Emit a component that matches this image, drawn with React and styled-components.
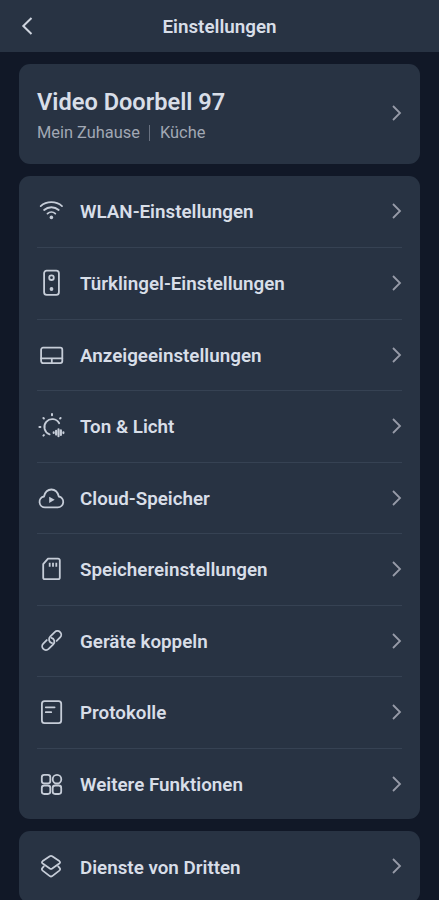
import styled, { createGlobalStyle } from "styled-components";

const GlobalStyle = createGlobalStyle`
  * {
    box-sizing: border-box;
  }

  body {
    margin: 0;
    background: #111827;
    color: #d8dee8;
    font-family: Roboto, "Liberation Sans", sans-serif;
  }
`;

const Page = styled.div`
  height: 900px;
  overflow: hidden;
`;

const Header = styled.header`
  display: grid;
  grid-template-columns: 60px 1fr 60px;
  align-items: center;
  height: 51.5px;
  padding-top: 2px;
  background: #283343;
`;

const BackButton = styled.button`
  display: flex;
  padding: 0 0 2px 18px;
  border: 0;
  background: none;
  color: #cfd5df;
`;

const Title = styled.h1`
  margin: 0;
  font-size: 18.8px;
  font-weight: 600;
  line-height: 24px;
  text-align: center;
`;

const Content = styled.main`
  display: flex;
  flex-direction: column;
  gap: 11.8px;
  padding: 12px 19px 0;
`;

const Card = styled.section`
  padding: 0 18px;
  border-radius: 11px;
  background: #283343;
`;

const DeviceCard = styled(Card)`
  display: flex;
  align-items: center;
  justify-content: space-between;
  height: 100.5px;
`;

const DeviceName = styled.h2`
  margin: 0;
  padding-top: 2px;
  font-size: 23.6px;
  font-weight: 600;
  line-height: 30px;
`;

const Location = styled.div`
  display: flex;
  align-items: center;
  gap: 9.5px;
  margin-top: 6px;
  color: #a1a8b4;
  font-size: 16.4px;
  line-height: 20px;
`;

const Divider = styled.span`
  width: 1px;
  height: 16px;
  background: #687180;
`;

const Row = styled.div`
  display: flex;
  align-items: center;
  height: 71.5px;
  color: #d8dee8;

  & + & {
    border-top: 1px solid #364253;
  }
`;

const Label = styled.span`
  flex: 1;
  margin-left: 15px;
  padding-top: 1.4px;
  font-size: 18.8px;
  font-weight: 600;
  line-height: 24px;
`;

const RowIcon = styled.svg`
  width: 28px;
  height: 28px;
  flex: none;
  margin-bottom: 0.5px;
  overflow: visible;
  fill: none;
  stroke: #c6cdd8;
  stroke-width: 1.8;
  stroke-linecap: round;
  stroke-linejoin: round;

  .solid {
    fill: #c6cdd8;
    stroke: none;
  }
`;

const ArrowIcon = styled.svg`
  width: 10px;
  height: 16px;
  flex: none;
  margin-bottom: 1px;
  fill: none;
  stroke: #979ba8;
  stroke-width: 1.8;
`;

const Arrow = () => (
  <ArrowIcon viewBox="0 0 10 16">
    <path d="M1 1 8 8 1 15" />
  </ArrowIcon>
);

const icons = {
  wifi: (
    <>
      <path d="M3.7 9.1C9.6 3.8 19.1 3.8 25 9.1" />
      <path d="M7.1 13C11.2 9.3 17.6 9.3 21.7 13" />
      <path d="M10.5 16.6C12.7 14.7 16.1 14.7 18.3 16.6" />
      <circle className="solid" cx="14.4" cy="20.4" r="1.8" />
    </>
  ),
  doorbell: (
    <>
      <rect x="7.1" y="1.6" width="14.8" height="24.3" rx="2.6" />
      <circle cx="14.5" cy="8.7" r="2.3" />
      <circle className="solid" cx="14.5" cy="20" r="1.9" />
    </>
  ),
  display: (
    <>
      <rect x="4.1" y="6.7" width="21.2" height="15.4" rx="2" />
      <path d="M4.1 17.3H25.3M14.8 17.3V22.1" />
    </>
  ),
  light: (
    <>
      <path d="M22.2 11.2A7.9 7.9 0 1 0 12.6 22.4" />
      <path
        strokeWidth="2"
        d="M15 2V3.2M6.4 6 6.9 6.5M23.6 6 23.1 6.5M2.4 14.9H3.4M6.4 23.6 6.9 23.1"
      />
      <path
        strokeWidth="2.1"
        d="M16.7 20.3V21M19.1 18.7V22.6M21.5 17.3V24.2M23.9 18.3V23M26.4 20.2V21.1"
      />
    </>
  ),
  cloud: (
    <>
      <path d="M8.2 23.4H20.8A5.5 5.5 0 0 0 21.8 12.5C20.8 8.4 18 5.5 14.4 5.5S8 8.4 7 12.5A5.5 5.5 0 0 0 8.2 23.4Z" />
      <path className="solid" d="M12.2 12.8V18.9L17.7 15.85Z" />
    </>
  ),
  storage: (
    <>
      <path d="M11 3.6H21A1.8 1.8 0 0 1 22.8 5.4V22.4A1.8 1.8 0 0 1 21 24.2H8A1.8 1.8 0 0 1 6.2 22.4V9.1Z" />
      <path strokeLinecap="butt" d="M12.7 7.8V11.8M16 7.8V11.8M19.3 7.8V11.8" />
    </>
  ),
  link: (
    <g transform="translate(14.7 13.5) rotate(-45)">
      <path d="M3.2 3.8H8.1A3.8 3.8 0 0 0 8.1 -3.8H1.6A3.8 3.8 0 0 0 -1.6 2.1" />
      <path d="M-3.2 -3.8H-8.1A3.8 3.8 0 0 0 -8.1 3.8H-1.6A3.8 3.8 0 0 0 1.6 -2.1" />
    </g>
  ),
  log: (
    <>
      <rect x="4.9" y="3.1" width="19.3" height="22.1" rx="2.6" />
      <path d="M8.8 9.3H17.6M8.8 14.2H14.2" />
    </>
  ),
  more: (
    <>
      <rect x="4.8" y="4.9" width="8.5" height="8.5" rx="2.4" />
      <circle cx="20" cy="9.2" r="4.3" />
      <rect x="4.8" y="15.5" width="8.5" height="8.5" rx="2.4" />
      <rect x="15.7" y="15.5" width="8.5" height="8.5" rx="2.4" />
    </>
  ),
  layers: (
    <>
      <path d="M12.8 3.3Q14 2.6 15.2 3.3L22.3 8.1Q23.9 9.3 22.3 10.5L15.2 15.5Q14 16.3 12.8 15.5L5.7 10.5Q4.1 9.3 5.7 8.1Z" />
      <path d="M6.8 13.4 5.5 14.8Q4.1 16.3 5.7 17.6L12.8 23.1Q14 23.9 15.2 23.1L22.3 17.6Q23.9 16.3 22.5 14.8L21.2 13.4" />
    </>
  ),
};

const settings = [
  { icon: "wifi", label: "WLAN-Einstellungen" },
  { icon: "doorbell", label: "Türklingel-Einstellungen" },
  { icon: "display", label: "Anzeigeeinstellungen" },
  { icon: "light", label: "Ton & Licht" },
  { icon: "cloud", label: "Cloud-Speicher" },
  { icon: "storage", label: "Speichereinstellungen" },
  { icon: "link", label: "Geräte koppeln" },
  { icon: "log", label: "Protokolle" },
  { icon: "more", label: "Weitere Funktionen" },
];

const SettingRow = ({ icon, label }) => (
  <Row>
    <RowIcon viewBox="0 0 28 28">{icons[icon]}</RowIcon>
    <Label>{label}</Label>
    <Arrow />
  </Row>
);

export default function App() {
  return (
    <Page>
      <GlobalStyle />
      <Header>
        <BackButton aria-label="Zurück">
          <svg width="16" height="18" viewBox="0 0 16 18" fill="none">
            <path d="M13.5 1 5.3 9l8.2 8" stroke="currentColor" strokeWidth="2" />
          </svg>
        </BackButton>
        <Title>Einstellungen</Title>
      </Header>
      <Content>
        <DeviceCard>
          <div>
            <DeviceName>Video Doorbell 97</DeviceName>
            <Location>
              <span>Mein Zuhause</span>
              <Divider />
              <span>Küche</span>
            </Location>
          </div>
          <Arrow />
        </DeviceCard>
        <Card>
          {settings.map((item) => (
            <SettingRow key={item.icon} {...item} />
          ))}
        </Card>
        <Card>
          <SettingRow icon="layers" label="Dienste von Dritten" />
        </Card>
      </Content>
    </Page>
  );
}
